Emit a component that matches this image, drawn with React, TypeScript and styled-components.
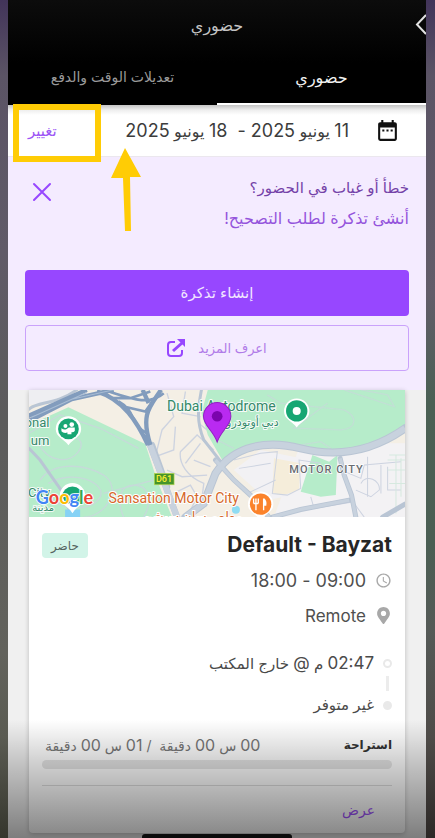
import React from 'react';
import styled, { createGlobalStyle, css } from 'styled-components';
import { MdDateRange, MdAccessTime } from 'react-icons/md';
import { FaMapMarkerAlt } from 'react-icons/fa';

const GlobalStyle = createGlobalStyle`
  *, *::before, *::after { box-sizing: border-box; }
  body { margin: 0; }
  button, a { font: inherit; }
`;

const Backdrop = styled.div`
  min-height: 100vh;
  display: grid;
  grid-template-columns: 9px minmax(0, 1fr) 8px;
  font-family: Inter, 'DejaVu Sans', sans-serif;
  font-size: 16px;
  line-height: 24px;
  color: #4a4a4a;
`;

const Edge = styled.div<{ $side: 'left' | 'right' }>`
  background: ${({ $side }) =>
    $side === 'left'
      ? 'linear-gradient(#42345a, #5b5465 9%, #605a68 30%, #5b5b5b 50%, #62625c 78%, #5a5b52 88%, #35362d)'
      : 'linear-gradient(#42345a, #5b5465 9%, #625c69 35%, #4a6054 48%, #4a5e53 65%, #555a57 75%, #4e4b48 88%, #2c2826)'};
`;

const Screen = styled.div`
  position: relative;
  display: flex;
  flex-direction: column;
  min-width: 0;
  overflow: hidden;
  background: #f0f0f0;
`;

const Header = styled.header`
  background: linear-gradient(#0c0c0c, #000 60%);
`;

const TitleBar = styled.div`
  position: relative;
  display: flex;
  align-items: center;
  justify-content: center;
  height: 50px;
`;

const ScreenTitle = styled.h1`
  margin: 0;
  font-size: 16px;
  font-weight: 400;
  color: #c4c4c4;
`;

const BackButton = styled.button`
  position: absolute;
  right: 0;
  display: flex;
  padding: 0;
  border: 0;
  background: none;
  color: #e2e2e2;
`;

const Tabs = styled.nav`
  display: grid;
  grid-template-columns: 1fr 1fr;
`;

const Tab = styled.button<{ $active?: boolean }>`
  height: 55px;
  padding: 0;
  border: 0;
  border-bottom: 2px solid ${({ $active }) => ($active ? '#fff' : '#000')};
  background: none;
  font-size: ${({ $active }) => ($active ? '16px' : '14px')};
  color: ${({ $active }) => ($active ? '#f2f2f2' : '#9a9a9a')};
`;

const Num = styled.span<{ $size: number }>`
  font-size: ${({ $size }) => $size}px;
`;

const DateBar = styled.div`
  position: relative;
  display: flex;
  align-items: center;
  height: 52px;
  padding: 0 26px 0 20px;
  background: linear-gradient(#c4c4c4, #eee 5px, #fff 10px);
  border-bottom: 1px solid #ebe7ee;
`;

const DateIcon = styled.span`
  display: flex;
  color: #111;
`;

const DateRange = styled.span`
  margin-right: 26px;
  font-size: 16px;
  white-space: pre;
  color: #3c3c3c;
`;

const ChangeButton = styled.button`
  margin-right: auto;
  padding: 0;
  border: 0;
  background: none;
  font-size: 15px;
  color: #9c55f5;
`;

const Highlight = styled.div`
  position: absolute;
  z-index: 2;
  top: -1px;
  left: 5px;
  width: 88px;
  height: 58px;
  border: 6px solid #ffcc05;
`;

const Arrow = styled.svg`
  position: absolute;
  z-index: 2;
  top: 43px;
  left: 102px;
`;

const Banner = styled.section`
  padding: 16px 17px 19px;
  background: #f4ebff;
`;

const BannerTop = styled.div`
  display: flex;
  justify-content: space-between;
  align-items: flex-start;
  min-height: 97px;
`;

const BannerText = styled.div`
  font-size: 16px;
  line-height: 30px;
  color: #9454dc;
`;

const BannerHeading = styled.h2`
  margin: 0;
  font-size: 15px;
  font-weight: 400;
  line-height: 30px;
  color: #7442a8;
`;

const CloseButton = styled.button`
  display: flex;
  margin: 9px 0 0 7px;
  padding: 0;
  border: 0;
  background: none;
  color: #9747ff;
`;

const BannerActions = styled.div`
  display: grid;
  gap: 9px;
`;

const action = css`
  display: flex;
  align-items: center;
  justify-content: center;
  gap: 12px;
  width: 100%;
  height: 46px;
  border-radius: 4px;
`;

const PrimaryButton = styled.button`
  ${action}
  border: 0;
  background: #9747ff;
  font-size: 15px;
  color: #f1e6ff;
`;

const LearnLink = styled.a`
  ${action}
  border: 1px solid #caa2fb;
  font-size: 13px;
  color: #b07ae8;
  text-decoration: none;
`;

const Card = styled.article`
  margin: 0 21px 5px;
  border-radius: 0 0 4px 4px;
  background: #fff;
  box-shadow: 0 1px 5px rgba(0, 0, 0, 0.22);
`;

const Map = styled.svg`
  display: block;
  width: 100%;
  height: 127px;
  direction: ltr;
  font-family: Roboto, 'DejaVu Sans', sans-serif;
`;

const CardBody = styled.div`
  display: flex;
  flex-direction: column;
  padding: 12px 13px 0;
`;

const CardHead = styled.div`
  display: flex;
  align-items: center;
  justify-content: space-between;
  height: 32px;
`;

const ShiftName = styled.h3`
  margin: 0;
  font-size: 21px;
  font-weight: 700;
  line-height: 32px;
  color: #262626;
`;

const Badge = styled.span`
  padding: 0 9px;
  border-radius: 4px;
  background: #d2f4e8;
  font-size: 12px;
  line-height: 25px;
  color: #56645f;
`;

const Detail = styled.div`
  display: flex;
  align-items: center;
  gap: 9px;
  height: 35px;
  font-size: 17px;
  color: #4f4f4f;

  svg {
    flex: 0 0 17px;
    color: #a8a8a8;
  }
`;

const DetailList = styled.div`
  margin-top: 2px;
`;

const Timeline = styled.ol`
  display: grid;
  gap: 14px;
  margin: 16px 0 0;
  padding: 0;
  list-style: none;
  font-size: 15px;
  line-height: 28px;
`;

const Punch = styled.li<{ $filled?: boolean }>`
  position: relative;
  display: flex;
  align-items: center;
  gap: 9px;
  height: 28px;

  &::before {
    content: '';
    width: 9px;
    height: 9px;
    border: 2px solid #e9e9e9;
    border-radius: 50%;
    background: ${({ $filled }) => ($filled ? '#e9e9e9' : '#fff')};
  }

  &:not(:last-child)::after {
    content: '';
    position: absolute;
    top: 27px;
    right: 3px;
    width: 3px;
    height: 15px;
    background: #ececec;
  }
`;

const BreakRow = styled.div`
  display: flex;
  align-items: center;
  justify-content: space-between;
  margin-top: 14px;
  padding-left: 3px;
  height: 24px;
`;

const BreakLabel = styled.strong`
  font-size: 12px;
  font-weight: 700;
  color: #333;
`;

const BreakTime = styled.span`
  font-size: 14px;
  white-space: pre;
  color: #777;
`;

const Track = styled.div`
  height: 9px;
  margin-top: 3px;
  border-radius: 5px;
  background: #e6e6e6;
`;

const CardFooter = styled.div`
  display: flex;
  align-items: center;
  height: 48px;
  margin-top: 16px;
  padding-right: 17px;
  border-top: 1px solid #dedede;
`;

const ViewLink = styled.a`
  font-size: 14px;
  color: #9c50f8;
  text-decoration: none;
`;

const Shade = styled.div`
  position: absolute;
  right: 0;
  bottom: 0;
  left: 0;
  height: 118px;
  background: linear-gradient(rgba(0, 0, 0, 0), rgba(0, 0, 0, 0.18) 35%, rgba(0, 0, 0, 0.48));
  pointer-events: none;
`;

const HomeBar = styled.div`
  position: absolute;
  bottom: 0;
  left: 134px;
  right: 134px;
  height: 4px;
  border-radius: 3px 3px 0 0;
  background: #0c0c0c;
`;

function LocationMap() {
  return (
    <Map viewBox="87 30 1125 381" preserveAspectRatio="xMidYMid slice" role="img" aria-label="Dubai Autodrome">
      <rect x="87" y="30" width="1125" height="381" fill="#f4efe5" />
      <path d="M900 190H1212V411H820Z" fill="#f3f2f4" />
      <path d="M87 30H230L150 70L87 75Z" fill="#eeeef2" />
      <path d="M700 270L780 210L900 235L880 345L800 360Z" fill="#f2f1f4" />
      <path d="M820 235L900 250L895 330L850 345L815 340Z" fill="#f5edda" />
      <path d="M87 135L205 82L330 142L435 192L470 300L515 411H87Z" fill="#b6ecca" />
      <path d="M622 30L603 100L622 165L665 240L740 205L830 185L990 213L1110 195L1212 140V30Z" fill="#b6ecca" />
      <path d="M935 225L985 245L1010 225L1005 345L960 350L900 335Z" fill="#b6ecca" />
      <g fill="none" stroke="#cdd3e0" strokeWidth="4">
        <path d="M87 160L180 105L300 145L415 205M115 190C145 250 210 250 235 215C260 180 220 160 180 165M120 300C160 245 250 250 310 285C370 325 315 411 250 411M145 310C220 265 320 310 300 350C275 400 170 390 150 345M370 411C345 350 365 315 400 315C450 315 455 370 430 411M310 340L460 300" strokeOpacity=".7" />
        <path d="M500 40L520 110L485 150L465 230L520 210L525 140M555 35L545 100L600 110M540 215C535 250 560 290 610 310L600 390M540 215L590 165L640 210M555 250L600 190M500 270L545 290L620 285M520 340L570 315L590 350L560 411M580 240L630 260M620 150L595 130" />
        <path d="M800 45L840 70L1030 90C1070 110 1070 145 1020 150L880 145L980 70M1030 30L1180 80L1160 45L1080 30M650 180L700 205M900 195L960 185L990 205" strokeOpacity=".5" />
        <path d="M700 240L780 220L830 215L815 340L860 345L900 325L895 240L960 250M715 265L810 250M740 340L825 300M1020 270L1080 295L1090 255L1200 245M1100 230V350M1140 255V340M1080 310C1095 280 1140 300 1135 330L1110 350L1065 330M1160 260V330H1200M930 350L940 385L1060 365M1060 370L1090 411" strokeWidth="3" />
      </g>
      <g fill="none" stroke="#d6e9df" strokeWidth="3">
        <path d="M1165 225H1212M1160 240H1212M1185 225V400M1200 235V350M1160 270H1212M1165 310H1212" />
      </g>
      <g fill="none" stroke="#b9c5d4" strokeWidth="13" strokeLinecap="round">
        <path d="M87 205L120 240L190 340L215 411M87 88C110 65 170 75 230 30M603 30C595 75 585 120 610 180L665 250" strokeWidth="9" />
        <path d="M449 195L485 290L530 411M455 195L500 320" strokeWidth="19" />
        <path d="M555 411L610 370L645 280C700 195 800 180 900 205C1020 235 1120 210 1212 145" strokeWidth="24" />
        <path d="M645 240L700 300L755 350L805 411" strokeWidth="15" />
        <path d="M1018 235L1030 285L1052 345L1065 411M815 411L900 388L1045 360M1145 411L1212 372" strokeWidth="15" />
      </g>
      <g fill="none" stroke="#c8d2de">
        <path d="M449 195L485 290L530 411M555 411L610 370L645 280C700 195 800 180 900 205C1020 235 1120 210 1212 145" strokeWidth="18" />
        <path d="M645 240L700 300L755 350L805 411M1018 235L1030 285L1052 345L1065 411M815 411L900 388L1045 360" strokeWidth="10" />
      </g>
      <g fill="none" stroke="#829cbd">
        <path d="M80 127L215 58L340 30M80 110L260 30M290 35C370 60 410 125 443 195M482 30C450 80 420 100 450 195M427 30L445 70" strokeWidth="13" />
        <path d="M310 30C390 55 445 80 490 40M330 55L390 55L450 35M370 80L435 95L460 60M355 65C410 95 385 130 440 160" strokeWidth="8" />
      </g>
      <path d="M215 58L340 30M95 112L260 38" stroke="#a9bdd4" strokeWidth="3" />
      <circle cx="706" cy="389" r="12" fill="#8edcf3" />
      <path d="M195 388H240V411H195Z" fill="#86d2f5" />

      <g fill="#34896a" stroke="#f6fbf8" strokeWidth="6" paintOrder="stroke" fontSize="42">
        <text x="148" y="142" textAnchor="end" fontSize="39">onal</text>
        <text x="148" y="194" textAnchor="end" fontSize="39">um</text>
        <text x="500" y="93">Dubai Autodrome</text>
        <text x="834" y="138" textAnchor="end" fontSize="33">دبي أوتودروم</text>
        <text x="84" y="350" fontSize="39">City</text>
        <text x="162" y="394" textAnchor="end" fontSize="30">مدينة</text>
      </g>

      <path d="M167 147a38 38 0 1 1 76 0c0 25-25 29-38 49c-13-20-38-24-38-49" fill="#fff" />
      <circle cx="205" cy="147" r="31" fill="#17a673" />
      <g fill="#fff">
        <circle cx="196" cy="138" r="6" />
        <circle cx="215" cy="134" r="7" />
        <path d="M184 145q8 6 16 2q5-4 8-4h16v10q-4 5-10 4v6h-12v-5q-12 3-18-4Z" />
      </g>
      <path d="M179 347a38 38 0 1 1 76 0c0 25-25 31-38 52c-13-21-38-27-38-52" fill="#fff" />
      <path d="M186 350a31 31 0 0 1 62 0l-12 20h-38Z" fill="#17a673" />
      <path d="M850 94a38 38 0 1 1 76 0c0 25-25 29-38 49c-13-20-38-24-38-49" fill="#fff" />
      <circle cx="888" cy="93" r="32" fill="#17a673" />
      <circle cx="888" cy="93" r="12" fill="#fff" />

      <rect x="462" y="280" width="59" height="34" fill="#45942b" stroke="#b6d84d" strokeWidth="2" />
      <text x="491" y="306" textAnchor="middle" fontSize="27" fontWeight="500" fill="#faed32">D61</text>
      <text x="866" y="279" fontSize="33" letterSpacing="3" fill="#686b70" fontWeight="500" stroke="#fff" strokeWidth="4" paintOrder="stroke">MOTOR CITY</text>
      <g fill="#d6682a" stroke="#fff" strokeWidth="6" paintOrder="stroke">
        <text x="325" y="370" fontSize="42">Sansation Motor City</text>
        <text x="726" y="421" textAnchor="end" fontSize="39">مطعم سان سيشن</text>
      </g>
      <path d="M742 372a38 38 0 1 1 76 0c0 25-25 29-38 49c-13-20-38-24-38-49" fill="#fff" />
      <circle cx="780" cy="372" r="32" fill="#fb832c" />
      <path d="M766 355v15m7-15v15m-14-15v15m0 0h14m-7 0v20M789 356v34" stroke="#fff" strokeWidth="4" fill="none" />
      <path d="M789 354q11 6 8 23h-8Z" fill="#fff" />

      <text x="107" y="371" fontSize="54" fontFamily="Lato, sans-serif" fontWeight="700" stroke="#fff" strokeWidth="5" paintOrder="stroke">
        <tspan fill="#4285f4">G</tspan><tspan fill="#ea4335">o</tspan><tspan fill="#fbbc05">o</tspan><tspan fill="#4285f4">g</tspan><tspan fill="#34a853">l</tspan><tspan fill="#ea4335">e</tspan>
      </text>

      <path d="M609 109a41 41 0 1 1 82 0c0 28-29 43-41 77c-12-34-41-49-41-77" fill="#b92af1" stroke="#9320c2" strokeWidth="3" />
      <circle cx="650" cy="109" r="16" fill="#7b04ad" />
    </Map>
  );
}

export default function App() {
  return (
    <>
      <GlobalStyle />
      <Backdrop dir="rtl" lang="ar">
        <Edge $side="right" />
        <Screen>
          <Header>
            <TitleBar>
              <ScreenTitle>حضوري</ScreenTitle>
              <BackButton aria-label="رجوع">
                <svg width="11" height="22" viewBox="0 0 11 22" fill="none" stroke="currentColor" strokeWidth="2">
                  <path d="M11 1L2 10.500L11 20" />
                </svg>
              </BackButton>
            </TitleBar>
            <Tabs>
              <Tab $active>حضوري</Tab>
              <Tab>تعديلات الوقت والدفع</Tab>
            </Tabs>
          </Header>

          <DateBar>
            <DateIcon><MdDateRange size={25} /></DateIcon>
            <DateRange>
              <Num $size={18}>11</Num>{' يونيو '}<Num $size={18}>{'2025 -  18'}</Num>{' يونيو '}<Num $size={18}>2025</Num>
            </DateRange>
            <ChangeButton>تغيير</ChangeButton>
            <Highlight />
            <Arrow width="32" height="84" viewBox="0 0 32 84" fill="#ffcc05" aria-hidden="true">
              <path d="M15 0L31 29H20L21 83H15L13 30H1Z" />
            </Arrow>
          </DateBar>

          <Banner>
            <BannerTop>
              <BannerText>
                <BannerHeading>خطأ أو غياب في الحضور؟</BannerHeading>
                أنشئ تذكرة لطلب التصحيح!
              </BannerText>
              <CloseButton aria-label="إغلاق">
                <svg width="20" height="20" viewBox="0 0 20 20" stroke="currentColor" strokeWidth="2" strokeLinecap="round">
                  <path d="M2 2L18 18M18 2L2 18" />
                </svg>
              </CloseButton>
            </BannerTop>
            <BannerActions>
              <PrimaryButton>إنشاء تذكرة</PrimaryButton>
              <LearnLink href="#more">
                اعرف المزيد
                <svg width="19" height="19" viewBox="0 0 19 19" fill="none" stroke="#9747ff" strokeWidth="2" aria-hidden="true">
                  <path d="M8 3H4Q1 3 1 6V14Q1 17 4 17H12Q15 17 15 14V11" />
                  <path d="M6 12L15 4" strokeWidth="3" />
                  <path d="M10 0H18V8Z" fill="#9747ff" stroke="none" />
                </svg>
              </LearnLink>
            </BannerActions>
          </Banner>

          <Card>
            <LocationMap />
            <CardBody>
              <CardHead>
                <ShiftName dir="ltr">Default - Bayzat</ShiftName>
                <Badge>حاضر</Badge>
              </CardHead>
              <DetailList>
                <Detail><MdAccessTime size={17} /><Num $size={18}>09:00 - 18:00</Num></Detail>
                <Detail><FaMapMarkerAlt size={17} />Remote</Detail>
              </DetailList>
              <Timeline>
                <Punch><span><Num $size={17}>02:47</Num> م <Num $size={17}>@</Num> خارج المكتب</span></Punch>
                <Punch $filled>غير متوفر</Punch>
              </Timeline>
              <BreakRow>
                <BreakLabel>استراحة</BreakLabel>
                <BreakTime>
                  <Num $size={16}>00</Num>{' س '}<Num $size={16}>00</Num>{' دقيقة  / '}<Num $size={16}>01</Num>{' س '}<Num $size={16}>00</Num>{' دقيقة'}
                </BreakTime>
              </BreakRow>
              <Track />
              <CardFooter>
                <ViewLink href="#view">عرض</ViewLink>
              </CardFooter>
            </CardBody>
          </Card>
          <Shade />
          <HomeBar />
        </Screen>
        <Edge $side="left" />
      </Backdrop>
    </>
  );
}
